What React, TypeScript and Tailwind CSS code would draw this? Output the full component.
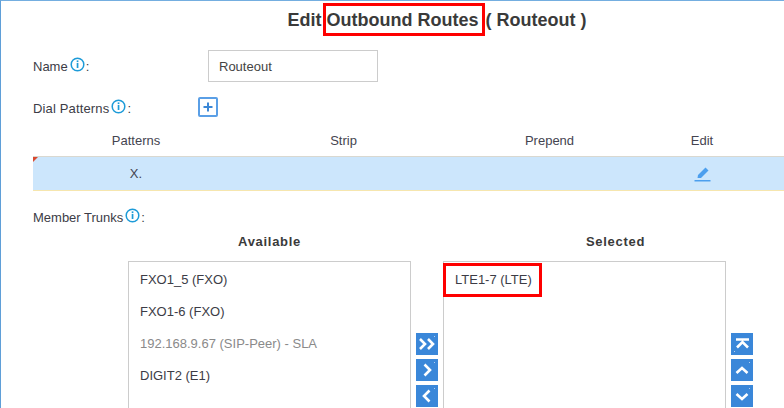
import React from "react";

function InfoIcon() {
  return (
    <svg width="15" height="15" viewBox="0 0 15 15" className="shrink-0">
      <circle cx="7.5" cy="7.5" r="6.3" fill="none" stroke="#1d9bd8" strokeWidth="1.5" />
      <rect x="6.7" y="3.4" width="1.7" height="1.7" fill="#1d9bd8" />
      <rect x="6.7" y="6" width="1.7" height="5" fill="#1d9bd8" />
    </svg>
  );
}

function Label({ text, className = "" }: { text: string; className?: string }) {
  return (
    <div className="flex items-start whitespace-nowrap">
      <span className={className}>{text}</span>
      <span className="mt-[-2px] ml-[2px]">
        <InfoIcon />
      </span>
      <span className="ml-px">:</span>
    </div>
  );
}

function ArrowButton({ d, dot = "top" }: { d: string; dot?: "top" | "bottom" }) {
  return (
    <button className="flex h-[22px] w-[22px] items-center justify-center bg-[#3a87d9]">
      <svg width="22" height="22" viewBox="0 0 22 22" fill="none">
        <path d={d} stroke="#fff" strokeWidth="2.6" />
        {dot === "top" ? (
          <rect x="18" y="3" width="1" height="1" fill="#fff" opacity="0.6" />
        ) : (
          <rect x="3" y="18" width="1" height="1" fill="#fff" opacity="0.6" />
        )}
      </svg>
    </button>
  );
}

const available = [
  { name: "FXO1_5 (FXO)", muted: false },
  { name: "FXO1-6 (FXO)", muted: false },
  { name: "192.168.9.67 (SIP-Peer) - SLA", muted: true },
  { name: "DIGIT2 (E1)", muted: false },
];

export default function App() {
  return (
    <div className="h-[408px] w-[784px] overflow-hidden border-t border-l border-t-[#74aee0] border-l-[#5f9fd8] bg-white font-['Liberation_Sans',Arial,sans-serif] text-[13px] leading-[16px] text-[#3c3c46]">
      {/* title */}
      <div className="flex h-[34px] items-start justify-center pt-[2px] pl-[89px] text-[18px] leading-[34px] font-bold text-[#3a3a3a]">
        <span>Edit</span>
        <span className="ml-[1px] h-[33px] border-[3px] border-[#fe0000] pr-[3px] pl-[1px] leading-[28px] whitespace-nowrap">
          Outbound Routes
        </span>
        <span className="ml-[1px] whitespace-nowrap">( Routeout )</span>
      </div>

      {/* name */}
      <div className="mt-[15px] flex h-[32px] items-center pl-[32px]">
        <div className="w-[175px] pt-[2px]">
          <Label text="Name" />
        </div>
        <div className="flex h-[32px] w-[170px] items-center border border-[#cccccc] pt-[2px] pl-[10px] text-[#444]">
          Routeout
        </div>
      </div>

      {/* dial patterns */}
      <div className="mt-[15px] flex h-[20px] items-center pl-[32px]">
        <div className="w-[165px] pt-[3px]">
          <Label text="Dial Patterns" className="tracking-[0.15px]" />
        </div>
        <button className="flex h-[20px] w-[20px] items-center justify-center rounded-[2px] border-2 border-[#5a9fe6]">
          <svg width="12" height="12" viewBox="0 0 12 12">
            <path d="M6 1.5v9M1.5 6h9" stroke="#3b87d6" strokeWidth="2" />
          </svg>
        </button>
      </div>

      {/* table */}
      <div className="mt-[13px] ml-[32px]">
        <div className="grid h-[26px] grid-cols-[206px_209px_203px_102px] items-center pb-[4px] text-center text-[#444450]">
          <div>Patterns</div>
          <div>Strip</div>
          <div>Prepend</div>
          <div>Edit</div>
        </div>
        <div className="relative grid h-[35px] grid-cols-[206px_209px_203px_102px] items-center border-t border-b border-t-[#d9d8d0] border-b-[#f6e6ae] bg-[#cce6fc] text-center text-[#44444f]">
          <span className="absolute top-0 left-0 h-0 w-0 border-t-[5px] border-r-[5px] border-t-[#d9492f] border-r-transparent" />
          <div>X.</div>
          <div />
          <div />
          <div className="flex justify-center">
            <svg width="17" height="16" viewBox="0 0 17 16">
              <path d="M3.5 12L4 9l7.5-7.5 3 3L7 12z" fill="#4c9fee" />
              <rect x="0.5" y="14" width="16" height="1.5" fill="#4c9fee" />
            </svg>
          </div>
        </div>
      </div>

      {/* member trunks */}
      <div className="mt-[19px] pl-[32px]">
        <Label text="Member Trunks" />
      </div>

      <div className="mt-[8px] ml-[127px] flex items-start">
        <div className="w-[283px]">
          <div className="h-[27px] text-center leading-[16px] font-bold tracking-[0.7px] text-[#3a3a3a]">Available</div>
          <div className="h-[160px] border border-[#cccccc] pt-[2px] pl-[11px]">
            {available.map((t) => (
              <div key={t.name} className={`flex h-[32px] items-center ${t.muted ? "text-[#8a8a8a]" : "text-[#3c3c46]"}`}>
                {t.name}
              </div>
            ))}
          </div>
        </div>

        <div className="mt-[99px] ml-[5px] flex w-[22px] flex-col gap-[4px]">
          <ArrowButton d="M4 6l5 5-5 5M12 6l5 5-5 5" />
          <ArrowButton d="M8.5 5.5l5.5 5.5-5.5 5.5" />
          <ArrowButton d="M13.5 5.5L8 11l5.5 5.5" />
        </div>

        <div className="ml-[5px] w-[283px]">
          <div className="h-[27px] pl-[62px] text-center leading-[16px] font-bold tracking-[0.7px] text-[#3a3a3a]">Selected</div>
          <div className="h-[160px] border border-[#cccccc]">
            <div className="mt-px -ml-px flex h-[34px] w-[99px] items-center border-[3px] border-[#fe0000] pl-[9px] whitespace-nowrap">
              LTE1-7 (LTE)
            </div>
          </div>
        </div>

        <div className="mt-[99px] ml-[5px] flex w-[22px] flex-col gap-[4px]">
          <ArrowButton d="M5 6.5h13M6 14.5L11.5 9l5.5 5.5" dot="bottom" />
          <ArrowButton d="M5.5 14L11 9l5.5 5" />
          <ArrowButton d="M5.5 9l5.5 5 5.5-5" />
        </div>
      </div>
    </div>
  );
}
